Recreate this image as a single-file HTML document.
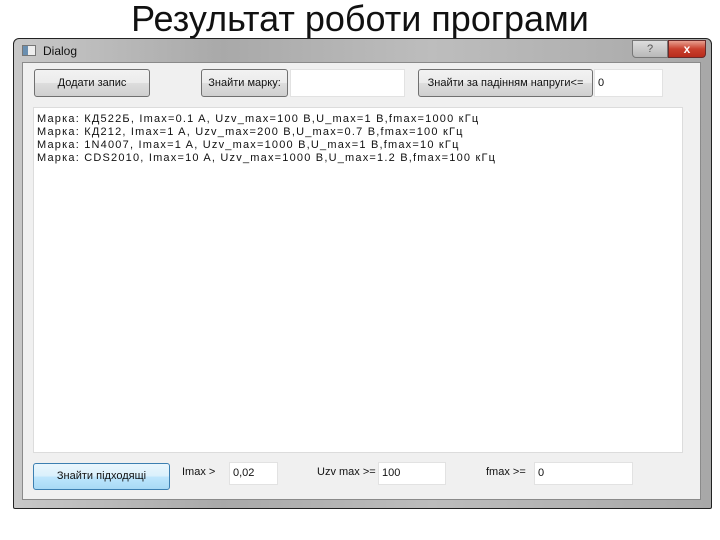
<!DOCTYPE html>
<html><head><meta charset="utf-8"><style>
*{margin:0;padding:0;box-sizing:border-box}
body{width:720px;height:540px;background:#fff;position:relative;overflow:hidden;font-family:"Liberation Sans","DejaVu Sans",sans-serif}
.a{position:absolute}
.h1{left:0;width:720px;top:-1px;text-align:center;font-size:36px;line-height:40px;color:#111;transform:scaleX(1.0)}
.win{left:13px;top:38px;width:699px;height:471px;border:1px solid #222;border-radius:6px 6px 2px 2px;background:linear-gradient(90deg,#c8c8c8 0%,#a9a9a9 30%,#bdbdbd 60%,#a8a8a8 100%)}
.client{left:22px;top:62px;width:679px;height:438px;background:#f0f0f0;border:1px solid #8a8a8a}
.btn{position:absolute;border:1px solid #707070;border-radius:3px;background:linear-gradient(#f2f2f2,#ebebeb 50%,#dddddd 51%,#cfcfcf);font-size:11px;color:#111;text-align:center}
.inp{position:absolute;background:#fff;border:1px solid #e2e2e2;font-size:11px;color:#111;padding-left:3px}
.lbl{position:absolute;font-size:11px;color:#111}
.txt{left:33px;top:107px;width:650px;height:346px;background:#fff;border:1px solid #dcdcdc;font-size:11px;letter-spacing:1.2px;line-height:13px;color:#111;padding:5px 0 0 3px;white-space:nowrap}
</style></head><body>
<div class="a h1">Результат роботи програми</div>
<div class="a win"></div>
<div class="a" style="left:22px;top:45px;width:14px;height:11px;border:1px solid #777;background:linear-gradient(90deg,#6a8fb0 40%,#eee 40%)"></div>
<div class="a" style="left:43px;top:44px;font-size:12px;color:#111">Dialog</div>
<div class="a" style="left:632px;top:40px;width:36px;height:18px;border:1px solid #777;border-radius:0 0 0 4px;background:linear-gradient(#ddd,#b8b8b8);font-size:11px;text-align:center;color:#555;line-height:16px">?</div>
<div class="a" style="left:668px;top:40px;width:38px;height:18px;border:1px solid #6a2a2a;border-radius:0 0 4px 0;background:linear-gradient(#e8a090,#c9402e 50%,#b82c1c);font-size:12px;font-weight:bold;text-align:center;color:#fff;line-height:16px">x</div>
<div class="a client"></div>
<div class="btn" style="left:34px;top:69px;width:116px;height:28px;line-height:26px">Додати запис</div>
<div class="btn" style="left:201px;top:69px;width:87px;height:28px;line-height:26px">Знайти марку:</div>
<div class="inp" style="left:290px;top:69px;width:115px;height:28px"></div>
<div class="btn" style="left:418px;top:69px;width:175px;height:28px;line-height:26px">Знайти за падінням напруги&lt;=</div>
<div class="inp" style="left:594px;top:69px;width:69px;height:28px;line-height:26px">0</div>
<div class="a txt">Марка: КД522Б, Imax=0.1 A, Uzv_max=100 B,U_max=1 B,fmax=1000 кГц<br>Марка: КД212, Imax=1 A, Uzv_max=200 B,U_max=0.7 B,fmax=100 кГц<br>Марка: 1N4007, Imax=1 A, Uzv_max=1000 B,U_max=1 B,fmax=10 кГц<br>Марка: CDS2010, Imax=10 A, Uzv_max=1000 B,U_max=1.2 B,fmax=100 кГц</div>
<div class="btn" style="left:33px;top:463px;width:137px;height:27px;line-height:25px;border-color:#3c7fb1;background:linear-gradient(#eaf6fd,#d9f0fc 50%,#bee6fd 51%,#a7d9f5)">Знайти підходящі</div>
<div class="lbl" style="left:182px;top:466px">Imax &gt;</div>
<div class="inp" style="left:229px;top:462px;width:49px;height:23px;line-height:21px">0,02</div>
<div class="lbl" style="left:317px;top:466px">Uzv max &gt;=</div>
<div class="inp" style="left:378px;top:462px;width:68px;height:23px;line-height:21px">100</div>
<div class="lbl" style="left:486px;top:466px">fmax &gt;=</div>
<div class="inp" style="left:534px;top:462px;width:99px;height:23px;line-height:21px">0</div>
</body></html>
